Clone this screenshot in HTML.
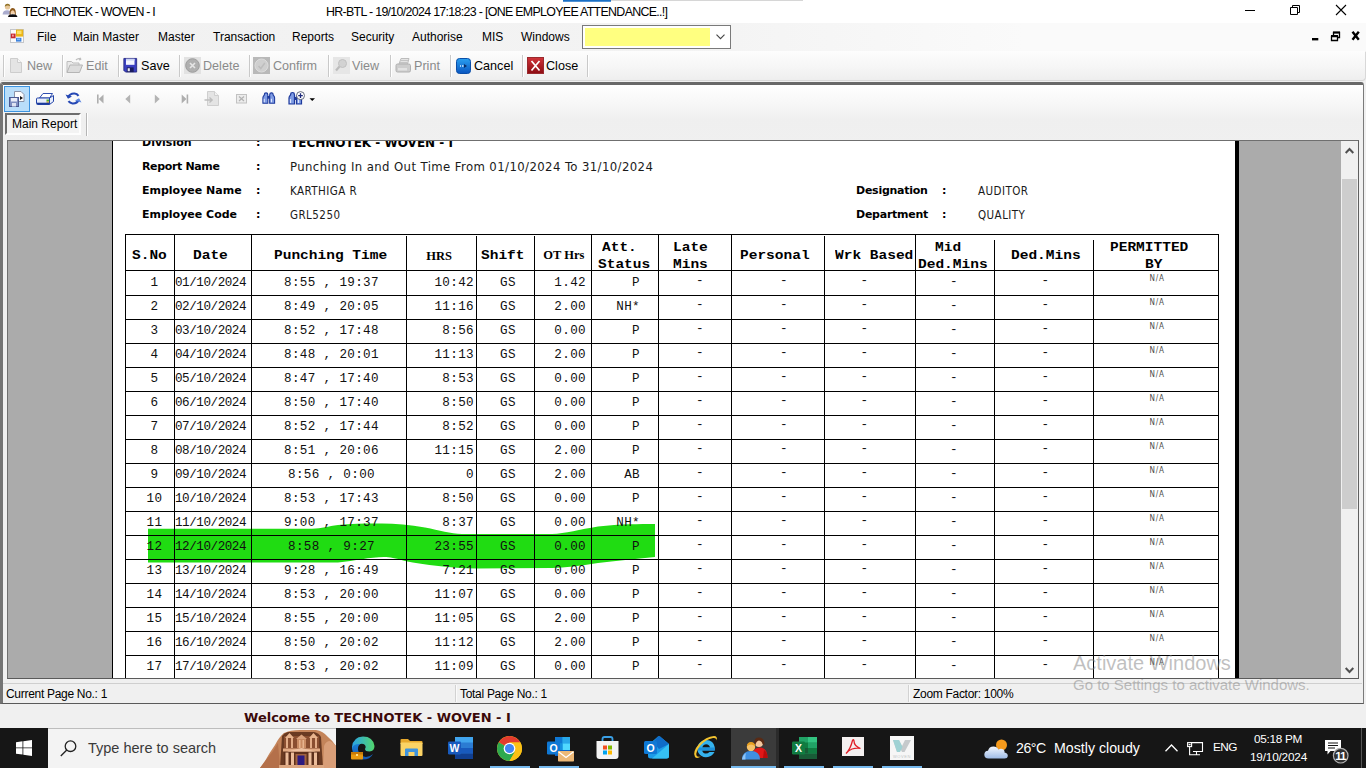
<!DOCTYPE html>
<html lang="en"><head><meta charset="utf-8"><title>TECHNOTEK - WOVEN - I</title>
<style>
*{box-sizing:border-box;margin:0;padding:0}
html,body{width:1366px;height:768px;overflow:hidden;background:#f0f0f0;font-family:"Liberation Sans",sans-serif;font-size:12px;color:#000}
body{position:relative}
.abs{position:absolute}
svg{display:block;position:absolute;overflow:visible}
/* title bar */
#titlebar{position:absolute;left:0;top:0;width:1366px;height:23px;background:#fff}
#titlebar .t{position:absolute;top:4px;font-size:12.4px;line-height:16px;letter-spacing:-0.8px;white-space:nowrap;color:#000}
#topaccent{position:absolute;left:563px;top:0;width:48px;height:2px;background:linear-gradient(#1a6fc4 60%,#a9cbee)}
#topaccent2{position:absolute;left:611px;top:0;width:192px;height:1px;background:#d6d6d6}
/* menu bar */
#menubar{position:absolute;left:0;top:23px;width:1366px;height:28px;background:linear-gradient(90deg,#f1f1f1,#f3f3f3 50%,#fafafa 75%)}
#menubar .m{position:absolute;top:7px;font-size:12px;line-height:15px;white-space:nowrap}
#combo{position:absolute;left:582px;top:2px;width:149px;height:24px;background:#fff;border:1px solid #7a7a7a}
#combo .y{position:absolute;left:2px;top:2px;width:125px;height:18px;background:#ffff80}
/* toolbar */
#toolbar{position:absolute;left:0;top:51px;width:1365px;height:29px;border-radius:0 0 4px 0;background:linear-gradient(#fdfdfd,#f6f6f6 55%,#eeeeee);box-shadow:1px 1px 0 #d8d8d8}
#toolbar .b{position:absolute;top:7px;font-size:12.6px;line-height:16px;white-space:nowrap;color:#8a8a8a}
#toolbar .b.on{color:#000}
#toolbar .sep{position:absolute;top:4px;width:1px;height:22px;background:#c9c9c9;box-shadow:1px 0 0 #fff}
/* viewer frame */
#vframe{position:absolute;left:0;top:82px;width:1364px;height:622px;border:solid #6a6a6a;border-width:3px 1px 1px 3px;border-color:#686868 #7a7a7a #5a5a5a #747474;border-radius:3px 3px 0 0;background:linear-gradient(#ffffff,#f6f6f6 20px,#efefef 34px,#f0f0f0 60px)}
#vtool{position:absolute;left:0;top:84px;width:1360px;height:29px}
#vsel{position:absolute;left:4px;top:86px;width:26px;height:26px;background:#b9defa;border:1px solid #3b93e0}
#tab{position:absolute;left:5px;top:113px;width:76px;height:22px;border:2px solid;border-color:#6d6d6d #fdfdfd #fdfdfd #6d6d6d;background:#f3f3f3;font-size:12px;line-height:18px;padding-left:5px;white-space:nowrap}
#tabsep{position:absolute;left:86px;top:113px;width:1px;height:23px;background:#b5b5b5;box-shadow:1px 0 0 #fff}
/* report viewport */
#viewport{position:absolute;left:7px;top:140px;width:1352px;height:539px;background:#ababab;border:1px solid #6a6a6a;border-color:#6f6f6f #5f5f5f #5a5a5a #6f6f6f;overflow:hidden}
#paper{position:absolute;left:104px;top:0;width:1127px;height:700px;background:#fff;border-left:1px solid #000;border-right:4px solid #000}
#paper > *{position:absolute}
/* paper content coords: origin = page(113,141) ; paper's content box starts at x=113? */
.vl{width:1px;background:#000;display:block}
.hl{left:12px;width:1094px;height:1px;background:#000;display:block}
.lbl{font-family:"DejaVu Sans",sans-serif;font-weight:bold;font-size:11px;line-height:14px;white-space:nowrap;color:#000}
.val{font-family:"DejaVu Sans Condensed","DejaVu Sans",sans-serif;font-size:11.5px;line-height:14px;letter-spacing:0.45px;white-space:nowrap;color:#1a1a1a}
.th{font-family:"Liberation Mono",monospace;font-weight:bold;font-size:12.5px;line-height:17px;white-space:pre;color:#000;display:inline-block;transform:scaleX(1.16);transform-origin:0 50%}
.ths{font-family:"Liberation Serif",serif;font-weight:bold;font-size:12.5px;line-height:17px;white-space:nowrap;color:#000}
.r{left:0;width:1120px;height:24px;font-family:"Liberation Mono",monospace;font-size:12.6px;line-height:15px;letter-spacing:0.35px;color:#101010}
.r .c{position:absolute;top:5px;white-space:pre}
.r .sn{left:21px;width:41px;text-align:center}
.r .dt{left:62px;letter-spacing:-0.45px}
.r .pt{left:141px;width:155px;text-align:center}
.r .hr{left:300px;width:61px;text-align:right}
.r .sh{left:366px;width:58px;text-align:center}
.r .ot{left:421px;width:52px;text-align:right}
.r .st{left:478px;width:49px;text-align:right}
.r .d1{left:583px;top:3px}.r .d2{left:667px;top:3px}.r .d3{left:747.500px;top:3px}.r .d4{left:837px;top:4px}.r .d5{left:928.500px;top:3px}
.r .na{left:1036.500px;top:3px;font-family:"DejaVu Sans Condensed","DejaVu Sans",sans-serif;font-size:8px;line-height:10px;letter-spacing:0.9px;color:#4a4a4a}
/* scrollbar */
#vscroll{position:absolute;left:1333px;top:0;width:17px;height:537px;background:#f0f0f0}
#vscroll .thumb{position:absolute;left:1px;top:38px;width:15px;height:330px;background:#cdcdcd}
/* status */
#status{position:absolute;left:3px;top:683px;width:1359px;height:20px;border-top:1px solid #cfcfcf;font-size:12px;letter-spacing:-0.3px}
#status span{position:absolute;top:3px;line-height:15px;white-space:nowrap}
#status i{position:absolute;top:1px;width:1px;height:17px;background:#d2d2d2;box-shadow:1px 0 0 #fafafa}
#welcome{position:absolute;left:0;top:706px;width:1366px;height:22px;background:#f0f0f0}
#welcome span{position:absolute;left:244px;top:4px;font-family:"DejaVu Sans",sans-serif;font-weight:bold;font-size:13px;line-height:16px;color:#3c0a0a;white-space:nowrap}
/* taskbar */
#taskbar{position:absolute;left:0;top:728px;width:1366px;height:40px;background:#161616}
#search{position:absolute;left:48px;top:0px;width:288px;height:40px;background:#f3f3f3;border-top:1px solid #bdbdbd;overflow:hidden}
#search span{position:absolute;left:40px;top:9px;font-size:14.5px;line-height:20px;color:#3a3a3a;white-space:nowrap}
#taskbar .tx{position:absolute;color:#fff;white-space:nowrap}
#taskbar .run{position:absolute;top:38px;height:2px;background:#76b9ed}
#activate{position:absolute;left:1073px;top:651px;color:rgba(130,130,130,.5);white-space:nowrap}

</style></head>
<body>
<div id="titlebar">
<svg style="left:2px;top:3px" width="16" height="15" viewBox="0 0 16 15"><circle cx="5.500" cy="4" r="2.600" fill="#e6c79a"/><path d="M2.800 3.800Q2.800 0.600 5.600 0.700Q8.300 0.800 8.300 3.600Q7 2.300 5.200 2.500Q3.800 2.800 2.800 3.800Z" fill="#94742a"/><path d="M0.600 11.500Q0.600 7.200 5.400 7.200Q8 7.200 9 9L9 11.500Z" fill="#aaacce"/><circle cx="10.700" cy="8.500" r="2.500" fill="#f3cfa8"/><path d="M7.600 12.500Q7 4.800 10.700 4.900Q14.400 4.800 13.800 12.500L12.700 12.200Q13.400 7.600 10.700 7.300Q8 7.600 8.700 12.200Z" fill="#8e5a1c"/><path d="M6 14Q6.200 11.300 10.700 11.300Q15.200 11.300 15.400 14Z" fill="#0c0c10"/></svg>
<span class="t" style="left:23px">TECHNOTEK - WOVEN - I</span>
<span class="t" style="left:326px;letter-spacing:-0.68px">HR-BTL - 19/10/2024 17:18:23 - [ONE EMPLOYEE ATTENDANCE..!]</span>
<svg style="left:1243px;top:4px" width="110" height="14" viewBox="0 0 110 14" fill="none" stroke="#000" stroke-width="1"><path d="M2 6.500H12"/><path d="M47.500 3.500H54.500V10.500H47.500Z M49.500 3.500V1.500H56.500V8.500H54.500"/><path d="M93 1L103 11M103 1L93 11" stroke-width="1.100"/></svg>
</div>
<i id="topaccent"></i><i id="topaccent2"></i>
<div id="menubar">
<svg style="left:10px;top:6px" width="14" height="14" viewBox="0 0 14 14"><rect x="0.500" y="0.500" width="13" height="13" fill="#fbfbfb" stroke="#c4c6ca"/><rect x="0.800" y="4.600" width="4.800" height="4.700" fill="#c8282e"/><rect x="2" y="5.600" width="1.800" height="2" fill="#f3a0a0"/><rect x="6" y="0.600" width="7.200" height="7" fill="#eab414"/><rect x="7" y="1.600" width="4.500" height="3.500" fill="#fbe06a"/><rect x="6" y="8.800" width="5.400" height="3.800" fill="#3a80dc"/><rect x="7" y="9.500" width="3.200" height="1.600" fill="#86b8f4"/></svg>
<span class="m" style="left:37px">File</span>
<span class="m" style="left:73px">Main Master</span>
<span class="m" style="left:158px">Master</span>
<span class="m" style="left:213px">Transaction</span>
<span class="m" style="left:292px">Reports</span>
<span class="m" style="left:351px">Security</span>
<span class="m" style="left:412px">Authorise</span>
<span class="m" style="left:482px">MIS</span>
<span class="m" style="left:521px">Windows</span>
<div id="combo"><i class="y abs"></i><svg style="left:133px;top:8px" width="9" height="6" viewBox="0 0 9 6" fill="none" stroke="#444" stroke-width="1.100"><path d="M0.500 0.700L4.500 4.700L8.500 0.700"/></svg></div>
<svg style="left:1310px;top:8px" width="52" height="12" viewBox="0 0 52 12" fill="none" stroke="#000"><path d="M2 8.200H8.300" stroke-width="2.400"/><path d="M21.500 5.500H27.500V9.500H21.500Z M23.500 4V1.500H29.500V6.500H28" stroke-width="1.300"/><path d="M21 5H28M23 1.500H30" stroke-width="2"/><path d="M42.500 0.800L48.800 8.800M48.800 0.800L42.500 8.800" stroke-width="2.400"/></svg>
</div>
<div id="toolbar">
<i class="sep" style="left:3px"></i>
<svg style="left:10px;top:7px" width="12" height="15" viewBox="0 0 12 15"><path d="M0.500 0.500H7.500L11.500 4.500V14.500H0.500Z" fill="#e4e4e4" stroke="#cdcdcd"/><path d="M7.500 0.500V4.500H11.500" fill="#f6f6f6" stroke="#cdcdcd"/></svg>
<span class="b" style="left:27px">New</span>
<i class="sep" style="left:62px"></i>
<svg style="left:66px;top:6px" width="18" height="18" viewBox="0 0 18 18"><path d="M1 15.500V4.500H5.500L7 6H13V8" fill="#e9e9e9" stroke="#bdbdbd"/><path d="M1 15.500L4 8H16.500L13.500 15.500Z" fill="#dcdcdc" stroke="#b5b5b5"/><path d="M10 3Q12.500 0.500 15 2.500L14 0.800M15 2.500L13 3" fill="none" stroke="#bdbdbd" stroke-width="1.200"/></svg>
<span class="b" style="left:86px">Edit</span>
<i class="sep" style="left:118px"></i>
<svg style="left:123px;top:7px" width="14.500" height="14.500" viewBox="0 0 16 17"><path d="M0.500 0.500H15.500V16.500H2.500L0.500 14.500Z" fill="#3a3fc0" stroke="#23267e"/><rect x="3" y="1" width="10" height="7" fill="#f4f6ff"/><rect x="3" y="1" width="10" height="2" fill="#c9d2f4"/><rect x="4" y="11" width="8" height="5.500" fill="#1a1c5e"/><rect x="5" y="12" width="2.500" height="3.500" fill="#e8e8f4"/></svg>
<span class="b on" style="left:141px">Save</span>
<i class="sep" style="left:179px"></i>
<svg style="left:184px;top:6px" width="17" height="17" viewBox="0 0 17 17"><rect x="0" y="0" width="17" height="17" fill="#e2e2e2"/><circle cx="8.500" cy="8.500" r="6.800" fill="#b0b0b0" stroke="#9c9c9c"/><path d="M6 6L11 11M11 6L6 11" stroke="#e6e6e6" stroke-width="1.600" fill="none"/></svg>
<span class="b" style="left:203px">Delete</span>
<i class="sep" style="left:249px"></i>
<svg style="left:253px;top:6px" width="17" height="17" viewBox="0 0 17 17"><rect x="0" y="0" width="17" height="17" fill="#b9b9b9"/><circle cx="8.500" cy="8.500" r="6.500" fill="#cfcfcf" stroke="#dcdcdc"/><path d="M5.500 9L7.800 11.500L11.800 6" stroke="#bdbdbd" stroke-width="1.500" fill="none"/></svg>
<span class="b" style="left:273px">Confirm</span>
<i class="sep" style="left:328px"></i>
<svg style="left:333px;top:6px" width="17" height="17" viewBox="0 0 17 17"><rect x="0" y="0" width="17" height="17" fill="#e6e6e6"/><circle cx="9.500" cy="6.500" r="4" fill="#d2d2d2" stroke="#c0c0c0"/><path d="M6.500 9.500L3 13.500" stroke="#bcbcbc" stroke-width="2.200"/></svg>
<span class="b" style="left:352px">View</span>
<i class="sep" style="left:390px"></i>
<svg style="left:395px;top:6px" width="17" height="17" viewBox="0 0 17 17"><path d="M4 7L6 1.500H14L12.500 7Z" fill="#e4e4e4" stroke="#bcbcbc"/><path d="M5.500 3.500H13M5 5.500H12.500" stroke="#c4c4c4"/><path d="M1 8.500Q1 7 2.500 7H13.500Q15.500 7 15.500 8.500V13.500Q15.500 15 14 15H2.500Q1 15 1 13.500Z" fill="#cdcdcd" stroke="#b0b0b0"/><rect x="3" y="11" width="9" height="2.500" fill="#e2e2e2"/></svg>
<span class="b" style="left:414px">Print</span>
<i class="sep" style="left:450px"></i>
<svg style="left:456px;top:7px" width="15" height="16" viewBox="0 0 15 16"><defs><linearGradient id="gc" x1="0" y1="0" x2="0" y2="1"><stop offset="0" stop-color="#2aa0f0"/><stop offset="1" stop-color="#0a55c0"/></linearGradient></defs><rect x="0.500" y="0.500" width="14" height="15" rx="3" fill="url(#gc)" stroke="#0a4ea8"/><path d="M8 6L11 8L8 10Z" fill="#082c66"/><path d="M4 8H5M6 8H7.500" stroke="#d6ecff" stroke-width="1.400"/></svg>
<span class="b on" style="left:474px">Cancel</span>
<i class="sep" style="left:522px"></i>
<svg style="left:527px;top:6px" width="17" height="17" viewBox="0 0 17 17"><defs><linearGradient id="gx" x1="0" y1="0" x2="0" y2="1"><stop offset="0" stop-color="#d0343a"/><stop offset="1" stop-color="#8c0c12"/></linearGradient></defs><rect x="0.500" y="0.500" width="16" height="16" fill="url(#gx)" stroke="#9a2a2e"/><path d="M4.500 4L12.500 13.500M12.500 4L4.500 13.500" stroke="#fff" stroke-width="1.700" fill="none"/></svg>
<span class="b on" style="left:546px">Close</span>
<i class="sep" style="left:587px"></i>
</div>
<div id="vframe"></div>
<i id="vsel"></i>
<div id="vtool">
<svg style="left:9px;top:7px" width="16" height="16" viewBox="0 0 16 16"><path d="M5.500 0.500H12L15 3.500V10.500H5.500Z" fill="#fdfdfd" stroke="#8a93a8"/><path d="M11 5L14 7L11 9Z" fill="#111"/><rect x="0.500" y="6.500" width="9" height="9" fill="#7f8fc0" stroke="#4c5a92"/><rect x="2" y="7" width="6" height="3.500" fill="#e9edf8"/><rect x="3" y="12" width="4" height="3.500" fill="#dfe4f2"/></svg>
<svg style="left:36px;top:9px" width="18" height="12" viewBox="0 0 18 12"><path d="M3.500 5L7 0.500H16.500L13.500 5Z" fill="#fff" stroke="#2f4fb0"/><path d="M0.500 6Q0.500 5 1.500 5H13.500L17.500 2.500V8.500L13.500 11.500H1.500Q0.500 11.500 0.500 10.500Z" fill="#e8eefc" stroke="#2444a8"/><path d="M13.500 5V11.500" stroke="#2444a8"/><rect x="10.500" y="6.500" width="2.500" height="2" fill="#4caf2c"/><rect x="10.500" y="8.500" width="2.500" height="1.200" fill="#e0a020"/><path d="M1 10.500H13" stroke="#1c3a9a" stroke-width="1.600"/></svg>
<svg style="left:65px;top:8px" width="17" height="13" viewBox="0 0 17 13" fill="none" stroke="#2648b4" stroke-width="2.200"><path d="M3 5.500Q5 1.200 9.500 1.500Q12 1.800 13.500 3.800"/><path d="M0.500 2.500L3 6.800L7 4.600Z" fill="#2648b4" stroke="none"/><path d="M14 7.500Q12 11.800 7.500 11.500Q5 11.200 3.500 9.200"/><path d="M16.500 10.500L14 6.200L10 8.400Z" fill="#5c86e0" stroke="none"/></svg>
<svg style="left:97px;top:10px" width="8" height="10" viewBox="0 0 8 10"><rect x="0" y="0.500" width="1.600" height="9" fill="#aeaeae"/><path d="M6.500 0.500V9.500L1.800 5Z" fill="#aeaeae"/></svg>
<svg style="left:125px;top:10px" width="6" height="10" viewBox="0 0 6 10"><path d="M5.200 0.500V9.500L0.300 5Z" fill="#b4b4b4"/></svg>
<svg style="left:154px;top:10px" width="6" height="10" viewBox="0 0 6 10"><path d="M0.800 0.500V9.500L5.700 5Z" fill="#b4b4b4"/></svg>
<svg style="left:181px;top:10px" width="8" height="10" viewBox="0 0 8 10"><rect x="5.600" y="0.500" width="1.600" height="9" fill="#aeaeae"/><path d="M0.700 0.500V9.500L5.400 5Z" fill="#aeaeae"/></svg>
<svg style="left:204px;top:7px" width="16" height="16" viewBox="0 0 16 16"><path d="M3.500 0.500H10.500L14.500 4.500V14.500H3.500Z" fill="#e4e4e4" stroke="#cfcfcf"/><path d="M10.500 0.500V4.500H14.500" fill="#f2f2f2" stroke="#cfcfcf"/><path d="M0.500 9H8M5.500 6.500L8.200 9L5.500 11.500" fill="none" stroke="#bdbdbd" stroke-width="1.300"/></svg>
<svg style="left:236px;top:10px" width="11" height="10" viewBox="0 0 11 10"><rect x="0.500" y="0.500" width="10" height="8.500" fill="#ececec" stroke="#c2c2c2"/><path d="M3 2.500L8 7M8 2.500L3 7" stroke="#b2b2b2" stroke-width="1.200" fill="none"/></svg>
<svg style="left:261.500px;top:8px" width="13.500" height="12.500" viewBox="0 0 15 13"><path d="M1 12V6Q1 4.500 2.500 3L3 1Q4.500 0 6 1L6.500 3V12Z" fill="#7e9be4" stroke="#1e3a9c" stroke-width="1.200"/><path d="M8.500 12V3L9 1Q10.500 0 12 1L12.500 3Q14 4.500 14 6V12Z" fill="#7e9be4" stroke="#1e3a9c" stroke-width="1.200"/><rect x="6" y="4" width="3" height="3" fill="#1e3a9c"/><path d="M2.500 11V7M10.500 11V7" stroke="#dfe8ff" stroke-width="1.200"/></svg>
<svg style="left:288px;top:7px" width="28" height="14" viewBox="0 0 28 14"><path d="M1 13V7Q1 5.500 2.500 4L3 2Q4.500 1 6 2L6.500 4V13Z" fill="#7e9be4" stroke="#1e3a9c" stroke-width="1.200"/><path d="M8.500 13V5H13.500V13Z" fill="#7e9be4" stroke="#1e3a9c" stroke-width="1.200"/><rect x="6" y="6" width="3" height="3" fill="#1e3a9c"/><path d="M2.500 12V8M10.500 12V8" stroke="#dfe8ff" stroke-width="1.200"/><circle cx="12.500" cy="4.600" r="4" fill="#fff" stroke="#555c70" stroke-width="0.900"/><path d="M10.200 4.600H14.800M12.500 2.300V6.900" stroke="#1e2a7c" stroke-width="1.300"/><path d="M21.500 7.300H27L24.250 10.100Z" fill="#000"/></svg>
</div>
<div id="tab">Main Report</div><i id="tabsep"></i>

<div id="viewport">
<div id="paper">
<span class="lbl" style="left:29px;top:-5px">Division</span><span class="lbl" style="left:143px;top:-5px">:</span><span class="lbl" style="left:177px;top:-5px;font-size:12px">TECHNOTEK - WOVEN - I</span>
<span class="lbl" style="left:29px;top:19px;letter-spacing:-0.35px">Report Name</span><span class="lbl" style="left:143px;top:19px">:</span><span class="val" style="left:177px;top:18px;font-size:13px;line-height:16px;letter-spacing:0.4px">Punching In and Out Time From 01/10/2024 To 31/10/2024</span>
<span class="lbl" style="left:29px;top:43px">Employee Name</span><span class="lbl" style="left:143px;top:43px">:</span><span class="val" style="left:177px;top:43px">KARTHIGA R</span>
<span class="lbl" style="left:29px;top:67px">Employee Code</span><span class="lbl" style="left:143px;top:67px">:</span><span class="val" style="left:177px;top:67px">GRL5250</span>
<span class="lbl" style="left:743px;top:43px;letter-spacing:-0.25px">Designation</span><span class="lbl" style="left:829px;top:43px">:</span><span class="val" style="left:865px;top:43px">AUDITOR</span>
<span class="lbl" style="left:743px;top:67px;letter-spacing:-0.25px">Department</span><span class="lbl" style="left:829px;top:67px">:</span><span class="val" style="left:865px;top:67px">QUALITY</span>

<svg id="green" style="left:0;top:370px" width="600" height="70" viewBox="113 511 600 70"><path d="M148 528.700L312 528.700C322 528.500 328 526.200 338 525C352 523.800 368 523.500 382 523.600C395 523.700 410 525 425 527.500C440 530.500 450 533.500 462 534L552 534C565 533.500 580 529.500 598 526.500C620 524 640 524 655 524L655 557C635 559 615 561 598 563C580 566 565 567.500 552 568L477 568.500C450 568 425 565 405 561C395 558 390 557 384 557C370 557 355 561 338 562.500L148 562.500Z" fill="#20dc12"/></svg>

<i class="vl" style="left:12px;top:93px;height:607px"></i>
<i class="vl" style="left:61px;top:93px;height:607px"></i>
<i class="vl" style="left:138px;top:93px;height:607px"></i>
<i class="vl" style="left:293px;top:95px;height:605px"></i>
<i class="vl" style="left:363px;top:95px;height:605px"></i>
<i class="vl" style="left:421px;top:95px;height:605px"></i>
<i class="vl" style="left:478px;top:93px;height:607px"></i>
<i class="vl" style="left:545px;top:93px;height:607px"></i>
<i class="vl" style="left:618px;top:93px;height:607px"></i>
<i class="vl" style="left:711px;top:95px;height:605px"></i>
<i class="vl" style="left:802px;top:93px;height:607px"></i>
<i class="vl" style="left:881px;top:99px;height:601px"></i>
<i class="vl" style="left:980px;top:99px;height:601px"></i>
<i class="vl" style="left:1105px;top:93px;height:607px"></i>
<i class="hl" style="top:93px"></i>
<i class="hl" style="top:129px"></i>
<i class="hl" style="top:154px"></i>
<i class="hl" style="top:178px"></i>
<i class="hl" style="top:202px"></i>
<i class="hl" style="top:226px"></i>
<i class="hl" style="top:250px"></i>
<i class="hl" style="top:274px"></i>
<i class="hl" style="top:298px"></i>
<i class="hl" style="top:322px"></i>
<i class="hl" style="top:346px"></i>
<i class="hl" style="top:370px"></i>
<i class="hl" style="top:394px"></i>
<i class="hl" style="top:418px"></i>
<i class="hl" style="top:442px"></i>
<i class="hl" style="top:466px"></i>
<i class="hl" style="top:490px"></i>
<i class="hl" style="top:514px"></i>
<i class="hl" style="top:538px"></i>
<span class="th" style="left:19.0px;top:106.5px">S.No</span>
<span class="th" style="left:79.8px;top:106.5px">Date</span>
<span class="th" style="left:161.0px;top:106.5px">Punching Time</span>
<span class="th" style="left:368.0px;top:106.5px">Shift</span>
<span class="th" style="left:488.8px;top:99.0px">Att.</span>
<span class="th" style="left:484.7px;top:116.0px">Status</span>
<span class="th" style="left:560.2px;top:99.0px">Late</span>
<span class="th" style="left:560.2px;top:116.0px">Mins</span>
<span class="th" style="left:626.7px;top:106.5px">Personal</span>
<span class="th" style="left:721.5px;top:106.5px">Wrk Based</span>
<span class="th" style="left:821.5px;top:99.0px">Mid</span>
<span class="th" style="left:804.9px;top:116.0px">Ded.Mins</span>
<span class="th" style="left:897.9px;top:106.5px">Ded.Mins</span>
<span class="th" style="left:996.9px;top:99.0px">PERMITTED</span>
<span class="th" style="left:1031.5px;top:116.0px">BY</span>
<span class="ths" style="left:313.3px;top:106.9px">HRS</span>
<span class="ths" style="left:430.3px;top:105.7px">OT Hrs</span>

<div class="r" style="top:130px">
<span class="c sn">1</span><span class="c dt">01/10/2024</span><span class="c pt">8:55 , 19:37</span><span class="c hr">10:42</span><span class="c sh">GS</span><span class="c ot">1.42</span><span class="c st">P</span>
<span class="c d1">-</span><span class="c d2">-</span><span class="c d3">-</span><span class="c d4">-</span><span class="c d5">-</span><span class="c na">N/A</span>
</div>
<div class="r" style="top:154px">
<span class="c sn">2</span><span class="c dt">02/10/2024</span><span class="c pt">8:49 , 20:05</span><span class="c hr">11:16</span><span class="c sh">GS</span><span class="c ot">2.00</span><span class="c st">NH*</span>
<span class="c d1">-</span><span class="c d2">-</span><span class="c d3">-</span><span class="c d4">-</span><span class="c d5">-</span><span class="c na">N/A</span>
</div>
<div class="r" style="top:178px">
<span class="c sn">3</span><span class="c dt">03/10/2024</span><span class="c pt">8:52 , 17:48</span><span class="c hr">8:56</span><span class="c sh">GS</span><span class="c ot">0.00</span><span class="c st">P</span>
<span class="c d1">-</span><span class="c d2">-</span><span class="c d3">-</span><span class="c d4">-</span><span class="c d5">-</span><span class="c na">N/A</span>
</div>
<div class="r" style="top:202px">
<span class="c sn">4</span><span class="c dt">04/10/2024</span><span class="c pt">8:48 , 20:01</span><span class="c hr">11:13</span><span class="c sh">GS</span><span class="c ot">2.00</span><span class="c st">P</span>
<span class="c d1">-</span><span class="c d2">-</span><span class="c d3">-</span><span class="c d4">-</span><span class="c d5">-</span><span class="c na">N/A</span>
</div>
<div class="r" style="top:226px">
<span class="c sn">5</span><span class="c dt">05/10/2024</span><span class="c pt">8:47 , 17:40</span><span class="c hr">8:53</span><span class="c sh">GS</span><span class="c ot">0.00</span><span class="c st">P</span>
<span class="c d1">-</span><span class="c d2">-</span><span class="c d3">-</span><span class="c d4">-</span><span class="c d5">-</span><span class="c na">N/A</span>
</div>
<div class="r" style="top:250px">
<span class="c sn">6</span><span class="c dt">06/10/2024</span><span class="c pt">8:50 , 17:40</span><span class="c hr">8:50</span><span class="c sh">GS</span><span class="c ot">0.00</span><span class="c st">P</span>
<span class="c d1">-</span><span class="c d2">-</span><span class="c d3">-</span><span class="c d4">-</span><span class="c d5">-</span><span class="c na">N/A</span>
</div>
<div class="r" style="top:274px">
<span class="c sn">7</span><span class="c dt">07/10/2024</span><span class="c pt">8:52 , 17:44</span><span class="c hr">8:52</span><span class="c sh">GS</span><span class="c ot">0.00</span><span class="c st">P</span>
<span class="c d1">-</span><span class="c d2">-</span><span class="c d3">-</span><span class="c d4">-</span><span class="c d5">-</span><span class="c na">N/A</span>
</div>
<div class="r" style="top:298px">
<span class="c sn">8</span><span class="c dt">08/10/2024</span><span class="c pt">8:51 , 20:06</span><span class="c hr">11:15</span><span class="c sh">GS</span><span class="c ot">2.00</span><span class="c st">P</span>
<span class="c d1">-</span><span class="c d2">-</span><span class="c d3">-</span><span class="c d4">-</span><span class="c d5">-</span><span class="c na">N/A</span>
</div>
<div class="r" style="top:322px">
<span class="c sn">9</span><span class="c dt">09/10/2024</span><span class="c pt">8:56 , 0:00</span><span class="c hr">0</span><span class="c sh">GS</span><span class="c ot">2.00</span><span class="c st">AB</span>
<span class="c d1">-</span><span class="c d2">-</span><span class="c d3">-</span><span class="c d4">-</span><span class="c d5">-</span><span class="c na">N/A</span>
</div>
<div class="r" style="top:346px">
<span class="c sn">10</span><span class="c dt">10/10/2024</span><span class="c pt">8:53 , 17:43</span><span class="c hr">8:50</span><span class="c sh">GS</span><span class="c ot">0.00</span><span class="c st">P</span>
<span class="c d1">-</span><span class="c d2">-</span><span class="c d3">-</span><span class="c d4">-</span><span class="c d5">-</span><span class="c na">N/A</span>
</div>
<div class="r" style="top:370px">
<span class="c sn">11</span><span class="c dt">11/10/2024</span><span class="c pt">9:00 , 17:37</span><span class="c hr">8:37</span><span class="c sh">GS</span><span class="c ot">0.00</span><span class="c st">NH*</span>
<span class="c d1">-</span><span class="c d2">-</span><span class="c d3">-</span><span class="c d4">-</span><span class="c d5">-</span><span class="c na">N/A</span>
</div>
<div class="r" style="top:394px">
<span class="c sn">12</span><span class="c dt">12/10/2024</span><span class="c pt">8:58 , 9:27</span><span class="c hr">23:55</span><span class="c sh">GS</span><span class="c ot">0.00</span><span class="c st">P</span>
<span class="c d1">-</span><span class="c d2">-</span><span class="c d3">-</span><span class="c d4">-</span><span class="c d5">-</span><span class="c na">N/A</span>
</div>
<div class="r" style="top:418px">
<span class="c sn">13</span><span class="c dt">13/10/2024</span><span class="c pt">9:28 , 16:49</span><span class="c hr">7:21</span><span class="c sh">GS</span><span class="c ot">0.00</span><span class="c st">P</span>
<span class="c d1">-</span><span class="c d2">-</span><span class="c d3">-</span><span class="c d4">-</span><span class="c d5">-</span><span class="c na">N/A</span>
</div>
<div class="r" style="top:442px">
<span class="c sn">14</span><span class="c dt">14/10/2024</span><span class="c pt">8:53 , 20:00</span><span class="c hr">11:07</span><span class="c sh">GS</span><span class="c ot">0.00</span><span class="c st">P</span>
<span class="c d1">-</span><span class="c d2">-</span><span class="c d3">-</span><span class="c d4">-</span><span class="c d5">-</span><span class="c na">N/A</span>
</div>
<div class="r" style="top:466px">
<span class="c sn">15</span><span class="c dt">15/10/2024</span><span class="c pt">8:55 , 20:00</span><span class="c hr">11:05</span><span class="c sh">GS</span><span class="c ot">2.00</span><span class="c st">P</span>
<span class="c d1">-</span><span class="c d2">-</span><span class="c d3">-</span><span class="c d4">-</span><span class="c d5">-</span><span class="c na">N/A</span>
</div>
<div class="r" style="top:490px">
<span class="c sn">16</span><span class="c dt">16/10/2024</span><span class="c pt">8:50 , 20:02</span><span class="c hr">11:12</span><span class="c sh">GS</span><span class="c ot">2.00</span><span class="c st">P</span>
<span class="c d1">-</span><span class="c d2">-</span><span class="c d3">-</span><span class="c d4">-</span><span class="c d5">-</span><span class="c na">N/A</span>
</div>
<div class="r" style="top:514px">
<span class="c sn">17</span><span class="c dt">17/10/2024</span><span class="c pt">8:53 , 20:02</span><span class="c hr">11:09</span><span class="c sh">GS</span><span class="c ot">0.00</span><span class="c st">P</span>
<span class="c d1">-</span><span class="c d2">-</span><span class="c d3">-</span><span class="c d4">-</span><span class="c d5">-</span><span class="c na">N/A</span>
</div>
</div>
<div id="vscroll"><i class="thumb"></i><svg style="left:4px;top:6px" width="9" height="7" viewBox="0 0 9 7" fill="none" stroke="#505050" stroke-width="2"><path d="M0.700 6L4.500 2L8.300 6"/></svg><svg style="left:4px;top:526px" width="9" height="7" viewBox="0 0 9 7" fill="none" stroke="#505050" stroke-width="2"><path d="M0.700 1L4.500 5L8.300 1"/></svg></div>
</div>
<div id="status"><span style="left:3px">Current Page No.: 1</span><i style="left:452px"></i><span style="left:457px">Total Page No.: 1</span><i style="left:905px"></i><span style="left:910px">Zoom Factor: 100%</span></div>
<div id="welcome"><span>Welcome to TECHNOTEK - WOVEN - I</span></div>
<div id="activate"><span style="font-size:20px;line-height:24px;display:block">Activate Windows</span><span style="font-size:15px;line-height:20px;display:block">Go to Settings to activate Windows.</span></div>
<div id="taskbar">
<svg style="left:16px;top:12px" width="16" height="16" viewBox="0 0 16 16" fill="#fff"><path d="M0 2.200L6.500 1.300V7.500H0Z M7.300 1.200L16 0V7.500H7.300Z M0 8.300H6.500V14.600L0 13.700Z M7.300 8.300H16V16L7.300 14.800Z"/></svg>
<div id="search"><svg style="left:12px;top:11px" width="17" height="17" viewBox="0 0 17 17" fill="none" stroke="#222" stroke-width="1.300"><circle cx="10.500" cy="6.200" r="5.300"/><path d="M6.800 10L0.800 16"/></svg><span>Type here to search</span>
<svg style="left:212px;top:0px" width="76" height="39" viewBox="260 729 76 39"><path d="M260 768L265 761Q270 752 275 745Q279 737 284 733Q290 730 300 730L316 730Q323 731 328 737Q333 741 336 746L336 768Z" fill="#c4845a"/><path d="M323 768L324 746Q326 741 330 741Q334 743 336 746L336 768Z" fill="#d99e78"/><path d="M260 768L266 760Q273 752 278 743L280 768Z" fill="#b4704a"/><path d="M280 768L282 736Q284 733 288 732L314 732Q319 733 321 737L323 768Z" fill="#6a3a22"/><rect x="284" y="736" width="35" height="13" fill="#8a4e30"/><path d="M285 738L289.500 733L294 738Z M309 738L313.500 733L318 738Z" fill="#e8b48e"/><path d="M296 739L301.500 734.500L307 739Z" fill="#d9a07a"/><rect x="286" y="738" width="2" height="10" fill="#e3ad88"/><rect x="291" y="738" width="2" height="10" fill="#e3ad88"/><rect x="310" y="738" width="2" height="10" fill="#e3ad88"/><rect x="315" y="738" width="2" height="10" fill="#e3ad88"/><rect x="297" y="739" width="9" height="9" fill="#c98a62"/><rect x="299" y="740" width="1.500" height="8" fill="#e8b48e"/><rect x="302.500" y="740" width="1.500" height="8" fill="#e8b48e"/><rect x="283" y="748.500" width="37" height="3" fill="#e2aa84"/><path d="M287 751.500L301.500 748L316 751.500Z" fill="#eec0a0"/><rect x="284" y="752" width="35" height="13" fill="#5e301c"/><rect x="285.500" y="752.500" width="3" height="12.500" fill="#ecbc9a"/><rect x="291" y="752.500" width="3" height="12.500" fill="#ecbc9a"/><rect x="308.500" y="752.500" width="3" height="12.500" fill="#ecbc9a"/><rect x="314" y="752.500" width="3" height="12.500" fill="#ecbc9a"/><rect x="295.500" y="754" width="11" height="11" fill="#a2623e"/><rect x="297.500" y="755.500" width="7" height="9.500" fill="#2c1a80"/><rect x="279" y="765" width="45" height="3" fill="#dca680"/></svg>
</div>
<i class="abs" style="left:731px;top:0;width:45px;height:40px;background:#3b3b3b"></i><i class="abs" style="left:776px;top:0;width:3px;height:40px;background:#2b2b2b"></i>
<i class="run" style="left:490px;width:40px"></i><i class="run" style="left:539px;width:40px"></i><i class="run" style="left:731px;width:45px"></i><i class="run" style="left:784px;width:40px"></i><i class="run" style="left:833px;width:40px"></i><i class="run" style="left:882px;width:40px"></i>
<!-- edge -->
<svg style="left:351px;top:8px" width="24" height="24" viewBox="0 0 24 24"><defs><linearGradient id="e1" x1="0" y1="0" x2="1" y2="0"><stop offset="0" stop-color="#2aa3e8"/><stop offset="1" stop-color="#52d66c"/></linearGradient><linearGradient id="e2" x1="0" y1="0" x2="0" y2="1"><stop offset="0" stop-color="#1b7fd6"/><stop offset="1" stop-color="#1456b0"/></linearGradient></defs><path d="M1 11Q2 1 12 0.500Q22 0.500 23.500 10Q23.500 15 18.500 15.500Q14 15.500 14 13Q15.500 11 14 9Q11.500 7 8 8.500Q3 10.500 1 14Z" fill="url(#e1)"/><path d="M1 12Q3 7.500 9 8Q6.500 10 7 14Q8 20 15 21Q19 21 22 18Q19 23.500 12 23.500Q1.500 23 1 12Z" fill="url(#e2)"/><circle cx="11.500" cy="11" r="2" fill="#151515"/><rect x="0" y="16" width="12" height="7.500" rx="1" fill="#e89a10"/><rect x="0" y="16" width="12" height="2.500" fill="#c67a08"/><rect x="5" y="18" width="2" height="2" fill="#ffe08a"/></svg>
<!-- explorer -->
<svg style="left:400px;top:10px" width="23" height="19" viewBox="0 0 23 19"><path d="M0.500 2Q0.500 1 1.500 1H8L10 3H21.500Q22.500 3 22.500 4V6H0.500Z" fill="#e8a92c"/><rect x="0.500" y="4.500" width="22" height="13.500" rx="1" fill="#fbd365"/><path d="M5 18V11.500Q5 10.500 6 10.500H17Q18 10.500 18 11.500V18H14.500V14H8.500V18Z" fill="#3f93dc"/></svg>
<!-- word -->
<svg style="left:448px;top:9px" width="25" height="22" viewBox="0 0 25 22"><rect x="7" y="0" width="18" height="22" rx="1.500" fill="#2b7cd3"/><rect x="7" y="0" width="18" height="5.500" fill="#41a5ee"/><rect x="7" y="11" width="18" height="5.500" fill="#185abd"/><rect x="7" y="16.500" width="18" height="5.500" fill="#103f91"/><rect x="0" y="4.500" width="13" height="13" rx="1.200" fill="#185abd"/><text x="6.500" y="15" font-family="Liberation Sans,sans-serif" font-weight="bold" font-size="10.500" fill="#fff" text-anchor="middle">W</text></svg>
<!-- chrome -->
<svg style="left:497px;top:8px" width="25" height="25" viewBox="0 0 24 24"><circle cx="12" cy="12" r="12" fill="#fbc116"/><path d="M12 12L1.610 6A12 12 0 0 1 22.390 6Z" fill="#e33b2e"/><path d="M12 12L1.610 6A12 12 0 0 0 12 24L17.200 15Z" fill="#2da94f"/><path d="M12 12L22.390 6H12Z" fill="#e33b2e"/><path d="M12 24A12 12 0 0 0 22.390 6H12L17.200 15Z" fill="#fbc116"/><circle cx="12" cy="12" r="5.600" fill="#fff"/><circle cx="12" cy="12" r="4.400" fill="#4285f4"/></svg>
<!-- outlook classic -->
<svg style="left:547px;top:9px" width="27" height="25" viewBox="0 0 27 25"><rect x="8" y="0" width="15" height="19" rx="1.500" fill="#1490df"/><rect x="8" y="0" width="7.500" height="6.500" fill="#0f78d4"/><rect x="15.500" y="0" width="7.500" height="6.500" fill="#28a8ea"/><rect x="15.500" y="6.500" width="7.500" height="6.500" fill="#50d9ff"/><rect x="8" y="6.500" width="7.500" height="6.500" fill="#1490df"/><rect x="8" y="13" width="15" height="6" fill="#0a63c9"/><rect x="0" y="4.500" width="13" height="13" rx="1.200" fill="#0f78d4"/><text x="6.500" y="15" font-family="Liberation Sans,sans-serif" font-weight="bold" font-size="10.500" fill="#fff" text-anchor="middle">O</text><rect x="11" y="14" width="16" height="10.500" rx="0.800" fill="#ecb877"/><path d="M11.500 14.800L19 20.500L26.500 14.800" fill="none" stroke="#fff" stroke-width="1.300"/></svg>
<!-- store -->
<svg style="left:596px;top:8px" width="23" height="24" viewBox="0 0 23 24"><path d="M6.500 6V3Q6.500 1 8.500 1H14.500Q16.500 1 16.500 3V6" fill="none" stroke="#3aa0e6" stroke-width="1.800"/><path d="M0.500 5H22.500V20Q22.500 23 19.500 23H3.500Q0.500 23 0.500 20Z" fill="#f4f4f4"/><rect x="7" y="9.500" width="4" height="4" fill="#f25022"/><rect x="12" y="9.500" width="4" height="4" fill="#7fba00"/><rect x="7" y="14.500" width="4" height="4" fill="#00a4ef"/><rect x="12" y="14.500" width="4" height="4" fill="#ffb900"/></svg>
<!-- outlook new -->
<svg style="left:644px;top:8px" width="26" height="23" viewBox="0 0 26 23"><path d="M4 9L14 0.500Q15 0 16 0.500L25 8V20Q25 22.500 22.500 22.500H6.500Q4 22.500 4 20Z" fill="#1c9be8"/><path d="M14 0.500Q15 0 16 0.500L25 8L15 13L9 6Z" fill="#0f6cc9"/><path d="M25 8V20Q25 22.500 22.500 22.500H8L25 8Z" fill="#35c0f4"/><rect x="0" y="5" width="13" height="13" rx="1.500" fill="#0f78d4"/><text x="6.500" y="15.500" font-family="Liberation Sans,sans-serif" font-weight="bold" font-size="10.500" fill="#fff" text-anchor="middle">O</text></svg>
<!-- ie -->
<svg style="left:693px;top:7px" width="26" height="25" viewBox="0 0 26 25"><path d="M5 15.500H21.800Q22.500 8 16.500 5.500Q10 3.500 6 8.500Q3 13 5.500 18Q8.500 23 15 22Q19.500 21 21.500 17H16.500Q14.500 19 12 18.500Q9 17.500 9.200 14.500Q9 9.500 13 9.300Q16.500 9.500 17 12.500H5Z" fill="#35b3ee"/><path d="M5 15.500H21.800Q22 13.500 21.500 12.500H5Z" fill="#1d8fd8"/><path d="M2 22Q-1 17 6 9Q13 1.500 21 1Q25 1 23.500 5.500Q23.500 2.500 20 3Q13 4 7 11Q2.500 17 3.500 20.500Q4.500 22.500 8 21.500Q4 24 2 22Z" fill="#f4c430"/></svg>
<!-- people app -->
<svg style="left:742px;top:9px" width="26" height="23" viewBox="0 0 26 23"><circle cx="17" cy="6" r="4" fill="#f3c9a0"/><path d="M12.500 7Q11.500 0.500 17 0.500Q22.500 0.500 22.500 8L20.500 7Q20 4 17 3.500Q14 4 13.500 8Z" fill="#5a2a14"/><path d="M10 21Q10 10.500 17.500 10.500Q25.500 10.500 25.500 21Z" fill="#e01818"/><path d="M22 13Q25.500 15 25.500 21H21Z" fill="#b80c0c"/><circle cx="9" cy="10" r="4.200" fill="#f6c26a"/><path d="M4.800 9.500Q5 5 9 5Q13 5 13.200 9.500Q11 7.500 9 7.500Q7 7.500 4.800 9.500Z" fill="#e8a020"/><path d="M0 22.500Q0 14 9 14Q18 14 18 22.500Z" fill="#3f8fe0"/><path d="M0 22.500Q0.500 18 4 16Q3 19 3.500 22.500Z" fill="#8ec4f6"/></svg>
<!-- excel -->
<svg style="left:792px;top:9px" width="25" height="22" viewBox="0 0 25 22"><rect x="7" y="0" width="18" height="22" rx="1.500" fill="#21a366"/><rect x="7" y="0" width="9" height="5.500" fill="#21a366"/><rect x="16" y="0" width="9" height="5.500" fill="#33c481"/><rect x="7" y="5.500" width="9" height="5.500" fill="#107c41"/><rect x="16" y="5.500" width="9" height="5.500" fill="#21a366"/><rect x="7" y="11" width="9" height="5.500" fill="#185c37"/><rect x="16" y="11" width="9" height="5.500" fill="#107c41"/><rect x="7" y="16.500" width="18" height="5.500" fill="#185c37"/><rect x="0" y="4.500" width="13" height="13" rx="1.200" fill="#107c41"/><text x="6.500" y="15" font-family="Liberation Sans,sans-serif" font-weight="bold" font-size="10.500" fill="#fff" text-anchor="middle">X</text></svg>
<!-- pdf -->
<svg style="left:842px;top:9px" width="22" height="19" viewBox="0 0 22 19"><rect x="0" y="0" width="22" height="19" fill="#f4f0f0"/><path d="M4 16.500Q8.500 12 10.500 3.500Q11.500 1.500 12 4Q12 9 18.500 11.500Q15 10.500 10 12Q6.500 13.500 4 16.500Z" fill="none" stroke="#e02028" stroke-width="1.300"/></svg>
<!-- woven -->
<svg style="left:890px;top:8px" width="24" height="24" viewBox="0 0 24 24"><rect x="0" y="0" width="24" height="24" fill="#f6f6f6"/><path d="M3 4H9L12 10L15 4H21L14.500 16H12L9.500 11L7 16Z" fill="#c6cacc"/><path d="M3 4H9L12.500 11L10 16L7 16Z" fill="#9fd2d4"/><text x="12" y="21.500" font-family="Liberation Sans,sans-serif" font-size="4" fill="#c2c6c8" text-anchor="middle" letter-spacing="0.600">WOVEN</text></svg>
<!-- weather -->
<svg style="left:984px;top:11px" width="25" height="20" viewBox="0 0 25 20"><defs><linearGradient id="cl" x1="0" y1="0" x2="0" y2="1"><stop offset="0" stop-color="#f4f8ff"/><stop offset="1" stop-color="#9ebbe6"/></linearGradient></defs><circle cx="17.500" cy="6" r="5.500" fill="#f59a1c"/><path d="M4.500 19.500Q0.300 19.500 0.300 15.500Q0.500 12 4 11.800Q5 7.500 9.500 7.500Q13 7.500 14.500 10.500Q17 9 19.500 10.500Q21 12 20.500 13.500Q24 14 23.800 17Q23.500 19.500 20.500 19.500Z" fill="url(#cl)"/></svg>
<span class="tx" style="left:1016px;top:10px;font-size:14.2px;letter-spacing:-0.5px;line-height:20px">26°C</span>
<span class="tx" style="left:1054px;top:10px;font-size:14.2px;line-height:20px">Mostly cloudy</span>
<svg style="left:1165px;top:16px" width="13" height="8" viewBox="0 0 13 8" fill="none" stroke="#fff" stroke-width="1.300"><path d="M0.500 7.300L6.500 1L12.500 7.300"/></svg>
<svg style="left:1187px;top:14px" width="17" height="14" viewBox="0 0 17 14" fill="none" stroke="#fff" stroke-width="1.100"><path d="M3.500 0.600H15.500V9.500H6"/><path d="M9.500 9.500V12.500M6 12.800H13"/><rect x="0.600" y="0.600" width="4" height="4" fill="#151515"/><path d="M2.600 4.600V12.800H6"/><path d="M1.600 2.600H3.600" stroke-width="1.400"/></svg>
<span class="tx" style="left:1213px;top:11px;font-size:11.8px;letter-spacing:-0.6px;line-height:16px">ENG</span>
<span class="tx" style="left:1254px;top:3px;font-size:11.8px;letter-spacing:-0.3px;line-height:16px">05:18 PM</span>
<span class="tx" style="left:1250px;top:21px;font-size:11.8px;letter-spacing:-0.2px;line-height:16px">19/10/2024</span>
<svg style="left:1324px;top:11px" width="26" height="26" viewBox="0 0 26 26"><path d="M1 1H17V12H6.500L3.500 15.500V12H1Z" fill="#fff"/><path d="M4 4H14M4 6.500H14M4 9H11" stroke="#151515" stroke-width="1.100"/><circle cx="16.700" cy="16.700" r="7.300" fill="#303030" stroke="#b0b0b0" stroke-width="1.200"/><text x="16.400" y="20.900" font-family="Liberation Sans,sans-serif" font-weight="bold" font-size="11.500" fill="#fff" text-anchor="middle" letter-spacing="-0.900">11</text></svg>
<i class="abs" style="left:1361px;top:0;width:1px;height:40px;background:#555"></i>

</div>

</body></html>
